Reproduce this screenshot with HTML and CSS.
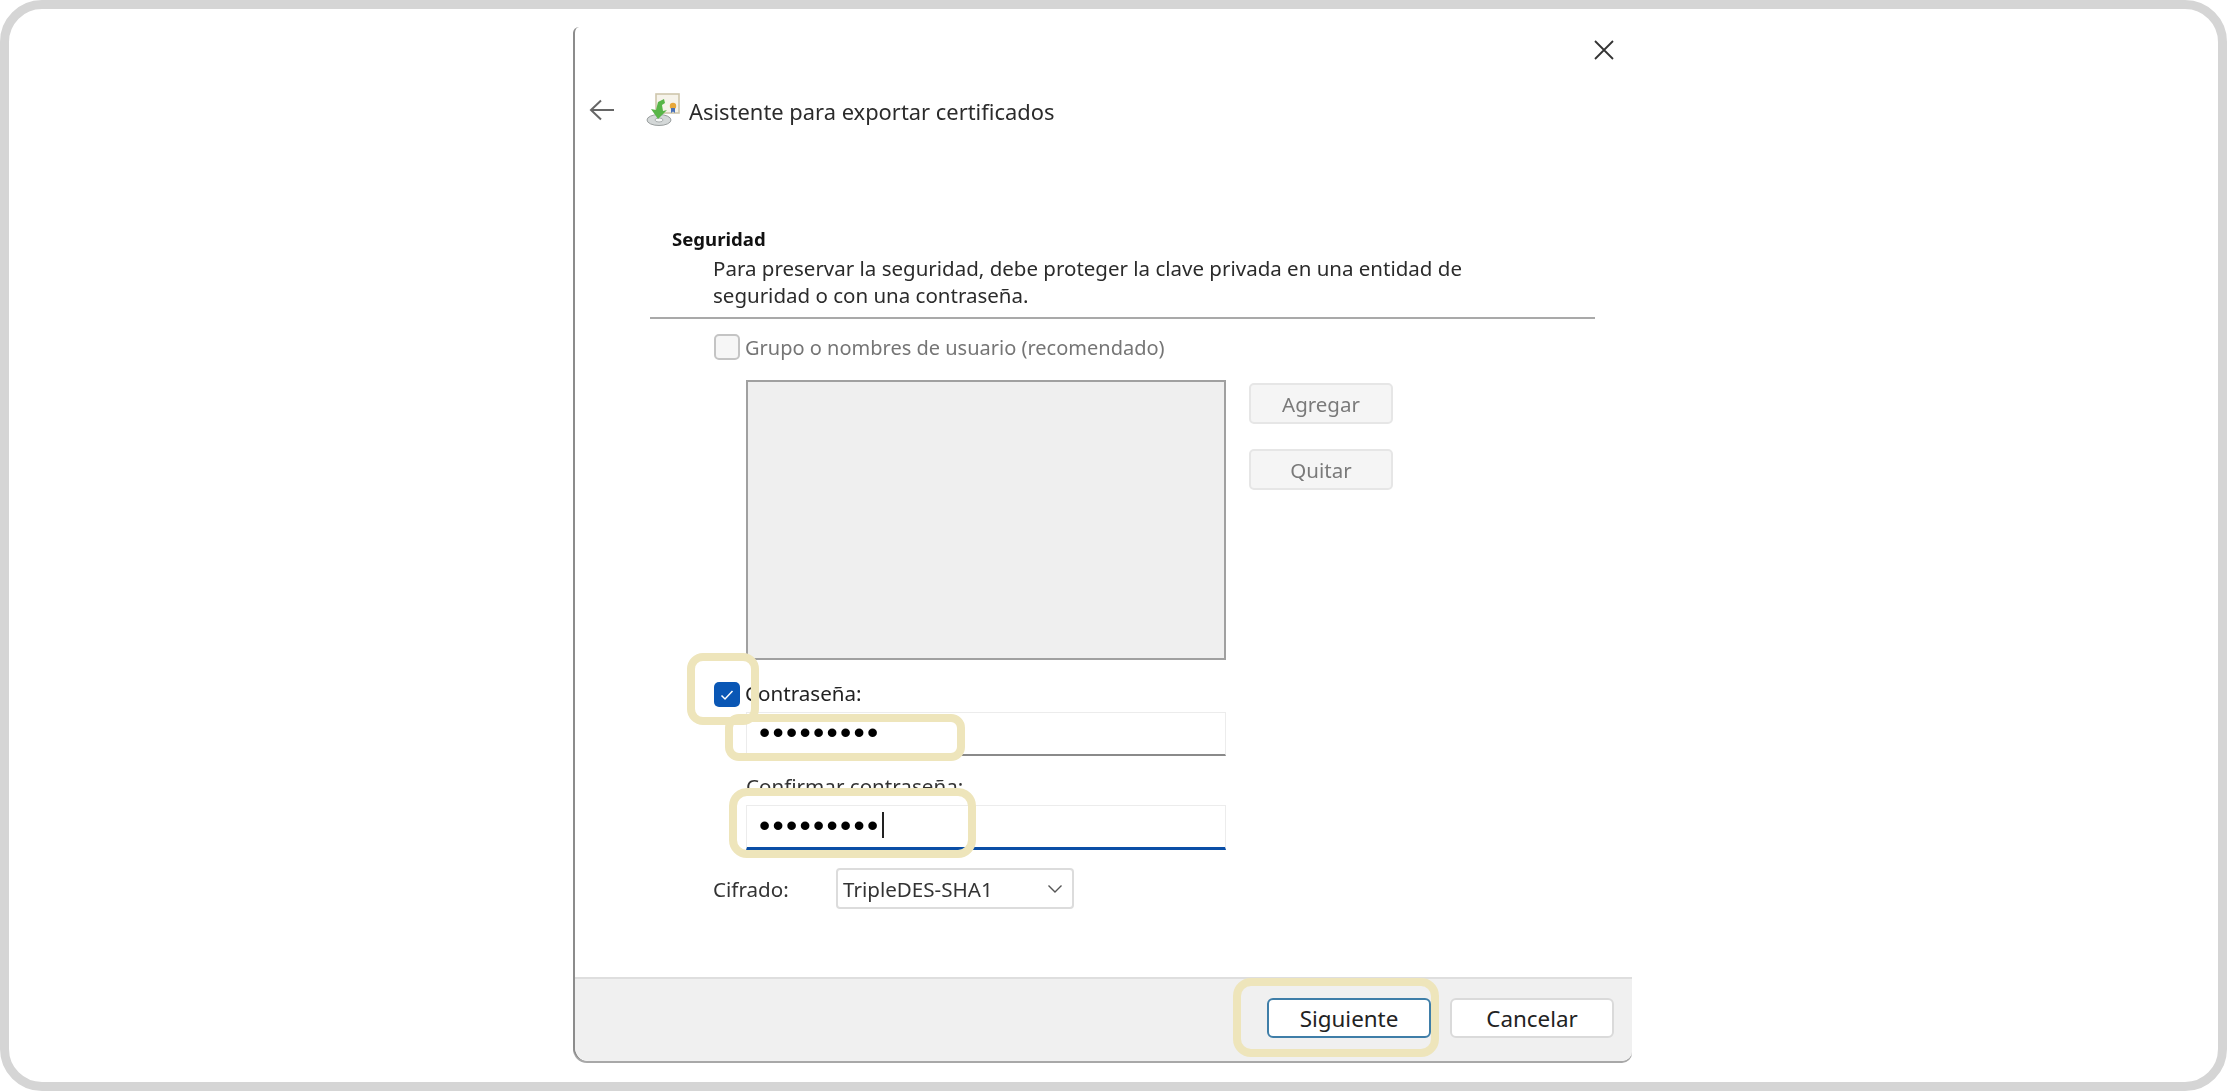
FILE: index.html
```html
<!DOCTYPE html>
<html lang="es">

<head>
    <meta charset="UTF-8">
    <meta name="viewport" content="width=device-width, initial-scale=1.0">
    <title>Asistente para exportar certificados</title>
    <link rel="stylesheet" href="styles.css">
</head>

<body>
    <div class="frame">
        <div class="dialog">
            <div class="close-row">
                <svg class="close-icon" width="20" height="20" viewBox="0 0 20 20">
                    <path d="M1 1 L19 19 M19 1 L1 19" stroke="#333" stroke-width="1.8" fill="none" />
                </svg>
            </div>

            <div class="title-row">
                <svg class="back-icon" width="26" height="22" viewBox="0 0 26 22">
                    <path d="M12 1.5 L2 11 L12 20.5 M2 11 H25" stroke="#666" stroke-width="2" fill="none" />
                </svg>
                <svg class="wizard-icon" width="34" height="34" viewBox="0 0 34 34">
                    <!-- certificate -->
                    <rect x="10" y="1" width="23" height="19" fill="#f6f3ea" stroke="#cfc6ac" stroke-width="1.6" />
                    <circle cx="27" cy="13" r="3.2" fill="#e8a83a" />
                    <path d="M25 15 V20 L27 18.5 L29 20 V15 Z" fill="#4a72b8" />
                    <!-- disc -->
                    <ellipse cx="13" cy="27" rx="12" ry="5.5" fill="#d4d8d8" stroke="#9a9f9f" stroke-width="1" />
                    <ellipse cx="13" cy="27" rx="4" ry="2" fill="#f4f6f6" stroke="#9a9f9f" stroke-width="0.8" />
                    <!-- arrow -->
                    <path d="M12 9 L18 6 L19 10 L16 12 L17 18 L21 17 L12 26 L5 16 L10 17 Z" fill="#58b548" />
                </svg>
                <h1 class="title">Asistente para exportar certificados</h1>
            </div>

            <div class="content">
                <h2 class="section-title">Seguridad</h2>
                <p class="section-text">Para preservar la seguridad, debe proteger la clave privada en una entidad de<br>seguridad o con una contraseña.</p>
                <div class="divider"></div>

                <div class="options">
                    <div class="check-row disabled">
                        <span class="check"></span>
                        <span class="group-label">Grupo o nombres de usuario (recomendado)</span>
                    </div>
                    <div class="users">
                        <div class="user-list"></div>
                        <div class="user-actions">
                            <button class="btn-off">Agregar</button>
                            <button class="btn-off">Quitar</button>
                        </div>
                    </div>

                    <div class="check-row password-row">
                        <span class="check checked">
                            <svg width="14" height="12" viewBox="0 0 14 12">
                                <path d="M1.5 6.5 L5 10 L12.5 2" stroke="#fff" stroke-width="1.5" fill="none" />
                            </svg>
                        </span>
                        <span class="password-label">Contraseña:</span>
                    </div>
                    <div class="field">
                        <span class="dots">•••••••••</span>
                    </div>
                    <div class="field-label">Confirmar contraseña:</div>
                    <div class="field focused">
                        <span class="dots">•••••••••</span><span class="caret"></span>
                    </div>

                    <div class="cipher-row">
                        <span class="cipher-label">Cifrado:</span>
                        <div class="select">
                            <span>TripleDES-SHA1</span>
                            <svg width="16" height="10" viewBox="0 0 16 10">
                                <path d="M1.5 1.5 L8 8 L14.5 1.5" stroke="#555" stroke-width="1.4" fill="none" />
                            </svg>
                        </div>
                    </div>
                </div>
            </div>

            <div class="footer">
                <button class="btn btn-default">Siguiente</button>
                <button class="btn">Cancelar</button>
            </div>

            <!-- Yellow marks painted over the capture -->
            <div class="mark mark-check"></div>
            <div class="mark mark-pass"></div>
            <div class="mark mark-confirm"></div>
            <div class="mark mark-next"></div>
        </div>
    </div>
</body>

</html>
```

FILE: styles.css
```css
/* Page */
* {
    box-sizing: border-box;
}

body {
    margin: 0;
    background-color: #ffffff;
    font-family: "Noto Sans", "Open Sans", sans-serif;
    color: #222;
}

/* Rounded frame round the capture */
.frame {
    width: 2227px;
    height: 1091px;
    border: 9px solid #d5d5d5;
    border-radius: 42px;
    padding: 18px 0 0 564px;
    background-color: #ffffff;
    overflow: hidden;
}

/* Dialog (the capture is a soft, upscaled image) */
.dialog {
    position: relative;
    display: flex;
    flex-direction: column;
    width: 1059px;
    height: 1034px;
    border-left: 2px solid #8c8c8c;
    border-top-left-radius: 6px;
    border-bottom-left-radius: 14px;
    border-bottom-right-radius: 10px;
    box-shadow: 0 2px 0 #a8a8a8;
    background-color: #ffffff;
    filter: blur(0.45px);
}

.close-row {
    display: flex;
    justify-content: flex-end;
    height: 50px;
    padding: 13px 18px 0 0;
}

.title-row {
    display: flex;
    align-items: center;
    height: 66px;
    padding-left: 14px;
}

.wizard-icon {
    margin-left: 31px;
}

.title {
    margin: 2px 0 0 9px;
    font-size: 21.9px;
    font-weight: 400;
    color: #2b2b2b;
}

/* Content */
.content {
    flex: 1;
}

.section-title {
    margin: 82px 0 2px 97px;
    font-size: 18.6px;
    line-height: 28px;
    font-weight: 700;
    color: #111;
}

.section-text {
    margin: 0 0 8px 138px;
    font-size: 20.5px;
    line-height: 27px;
    color: #2b2b2b;
}

.divider {
    height: 2px;
    width: 945px;
    margin-left: 75px;
    background-color: #a9a9a9;
}

.options {
    margin: 15px 0 0 139px;
    font-size: 20.6px;
}

/* Check rows */
.check-row {
    display: flex;
    align-items: center;
    gap: 5px;
    height: 26px;
}

.check-row.disabled {
    color: #757575;
}

.group-label {
    font-size: 20px;
}

.check {
    display: flex;
    justify-content: center;
    align-items: center;
    width: 26px;
    height: 26px;
    border: 2px solid #c4c4c4;
    border-radius: 5px;
    background-color: #f6f6f6;
}

.check.checked {
    border: none;
    background-color: #0a57b5;
}

.password-row {
    margin-top: 22px;
    height: 25px;
}

.password-row .check {
    height: 25px;
}

.password-label {
    margin-top: -3px;
}

/* User list */
.users {
    display: flex;
    margin: 20px 0 0 32px;
}

.user-list {
    width: 480px;
    height: 280px;
    border: 2px solid #a0a0a0;
    background-color: #efefef;
}

.user-actions {
    display: flex;
    flex-direction: column;
    gap: 25px;
    margin-left: 23px;
    padding-top: 3px;
}

.btn-off {
    width: 144px;
    height: 41px;
    border: 2px solid #e6e6e6;
    border-radius: 5px;
    background-color: #f5f5f5;
    font-family: inherit;
    font-size: 20.5px;
    color: #7a7a7a;
}

/* Password fields */
.field {
    display: flex;
    align-items: center;
    width: 480px;
    height: 44px;
    margin: 5px 0 0 32px;
    padding: 0 0 3px 12px;
    border: 1px solid #ececec;
    border-bottom: 2px solid #8a8a8a;
    background-color: #ffffff;
}

.field.focused {
    height: 45px;
    margin-top: 7px;
    border-bottom: 3px solid #0a4ea6;
}

.field-label {
    height: 24px;
    margin: 18px 0 0 32px;
    line-height: 24px;
    color: #333;
}

.dots {
    font-family: "Liberation Sans", sans-serif;
    font-size: 32px;
    line-height: 30px;
    letter-spacing: 2.3px;
    color: #000;
}

.caret {
    width: 2px;
    height: 26px;
    margin-left: 1px;
    background-color: #222;
}

/* Cipher select */
.cipher-row {
    display: flex;
    align-items: center;
    height: 41px;
    margin: 18px 0 0 -1px;
}

.cipher-label {
    width: 123px;
    color: #333;
}

.select {
    display: flex;
    justify-content: space-between;
    align-items: center;
    width: 238px;
    height: 41px;
    padding: 0 9px 0 5px;
    border: 2px solid #dcdcdc;
    border-radius: 4px;
    background-color: #ffffff;
    color: #333;
}

/* Footer */
.footer {
    display: flex;
    justify-content: flex-end;
    gap: 19px;
    height: 84px;
    padding: 19px 18px 0 0;
    border-top: 2px solid #dedede;
    border-bottom-left-radius: 14px;
    border-bottom-right-radius: 10px;
    background-color: #f0f0f0;
}

.btn {
    width: 164px;
    height: 40px;
    border: 2px solid #dadada;
    border-radius: 6px;
    background-color: #ffffff;
    font-family: inherit;
    font-size: 22.4px;
    color: #222;
}

.btn-default {
    border-color: #3f7ea8;
}

/* Yellow marks */
.mark {
    position: absolute;
    border: 8px solid #eee5bb;
    pointer-events: none;
}

.mark-check {
    left: 112px;
    top: 626px;
    width: 72px;
    height: 72px;
    border-radius: 16px;
}

.mark-pass {
    left: 150px;
    top: 687px;
    width: 240px;
    height: 47px;
    border-radius: 14px;
}

.mark-confirm {
    left: 154px;
    top: 761px;
    width: 247px;
    height: 70px;
    border-radius: 18px;
}

.mark-next {
    left: 658px;
    top: 951px;
    width: 206px;
    height: 79px;
    border-radius: 18px;
}
```
